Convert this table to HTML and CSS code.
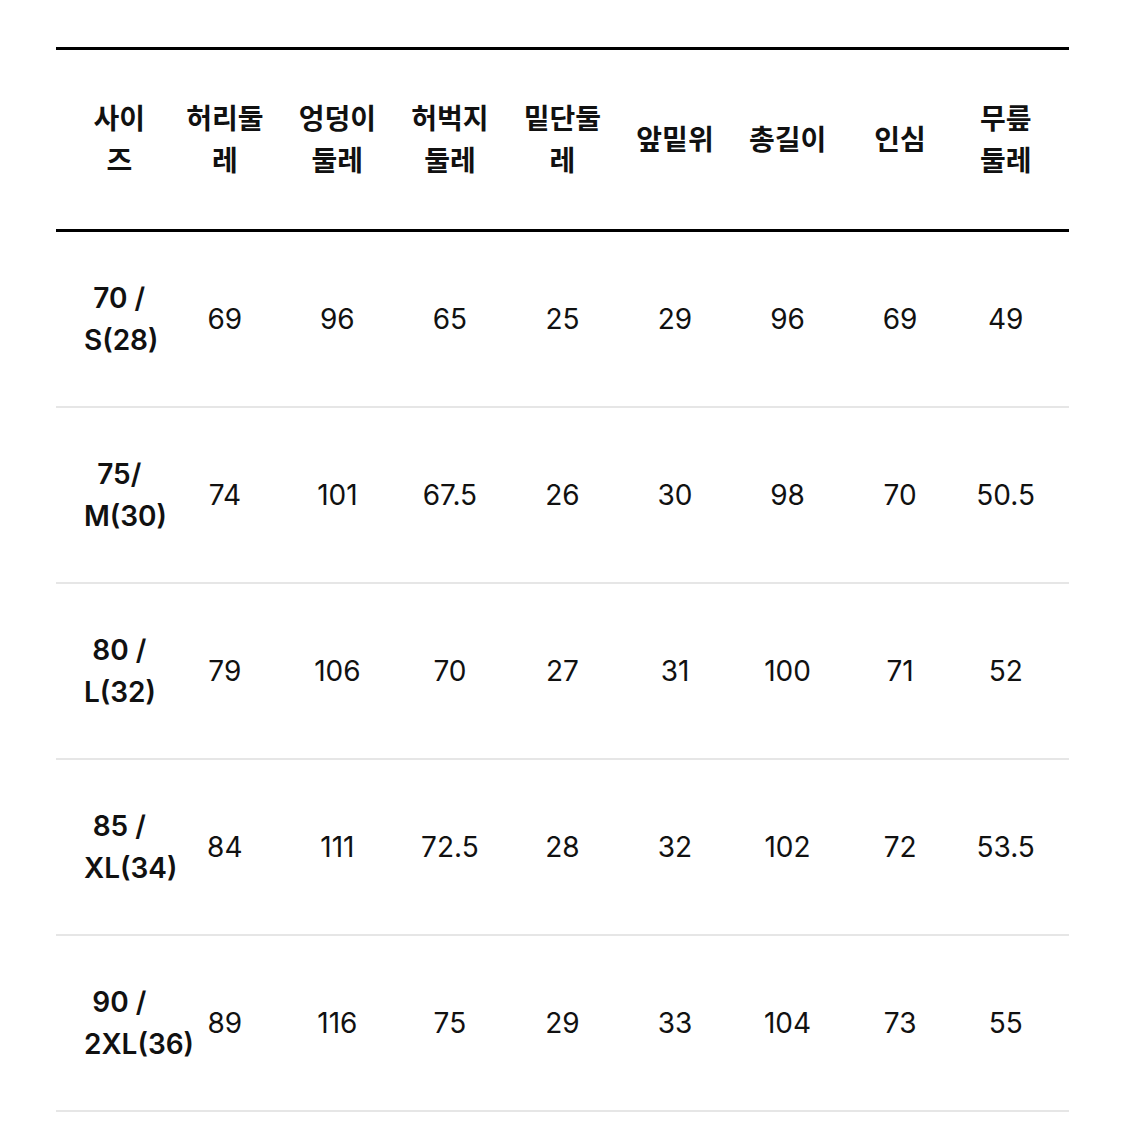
FILE: index.html
```html
<!DOCTYPE html>
<html lang="ko">
<head>
<meta charset="utf-8">
<link rel="stylesheet" href="styles.css">
</head>
<body>
<div class="wrap">
<table class="size-table">
<thead>
<tr>
<th>사이즈</th><th>허리둘레</th><th>엉덩이둘레</th><th>허벅지둘레</th><th>밑단둘레</th><th>앞밑위</th><th>총길이</th><th>인심</th><th>무릎둘레</th>
</tr>
</thead>
<tbody>
<tr><td class="sz">70 / S(28)</td><td>69</td><td>96</td><td>65</td><td>25</td><td>29</td><td>96</td><td>69</td><td>49</td></tr>
<tr><td class="sz">75/ M(30)</td><td>74</td><td>101</td><td>67.5</td><td>26</td><td>30</td><td>98</td><td>70</td><td>50.5</td></tr>
<tr><td class="sz">80 / L(32)</td><td>79</td><td>106</td><td>70</td><td>27</td><td>31</td><td>100</td><td>71</td><td>52</td></tr>
<tr><td class="sz">85 / XL(34)</td><td>84</td><td>111</td><td>72.5</td><td>28</td><td>32</td><td>102</td><td>72</td><td>53.5</td></tr>
<tr><td class="sz">90 / 2XL(36)</td><td>89</td><td>116</td><td>75</td><td>29</td><td>33</td><td>104</td><td>73</td><td>55</td></tr>
</tbody>
</table>
</div>
</body>
</html>
```

FILE: styles.css
```css
html, body {
  margin: 0;
  padding: 0;
  background: #fff;
}
.wrap {
  padding: 47px 56px 0 56px;
}
.size-table {
  width: 100%;
  border-collapse: collapse;
  table-layout: fixed;
  font-family: Inter, "Noto Sans CJK KR", sans-serif;
  font-size: 28px;
  line-height: 42px;
  color: #111;
}
.size-table th,
.size-table td {
  text-align: center;
  vertical-align: middle;
  padding: 0 14px;
  word-break: keep-all;
  overflow-wrap: normal;
}
.size-table th:first-child,
.size-table td:first-child {
  padding-left: 28px;
}
.size-table th:last-child,
.size-table td:last-child {
  padding-right: 28px;
}
.size-table thead tr {
  border-top: 3px solid #000;
  border-bottom: 3px solid #000;
}
.size-table th {
  font-weight: 700;
  height: 179px;
  word-break: break-all;
}
.size-table tbody tr {
  border-bottom: 2px solid #e6e6e6;
}
.size-table td {
  font-weight: 400;
  height: 174px;
}
.size-table td.sz {
  font-weight: 600;
}
```
